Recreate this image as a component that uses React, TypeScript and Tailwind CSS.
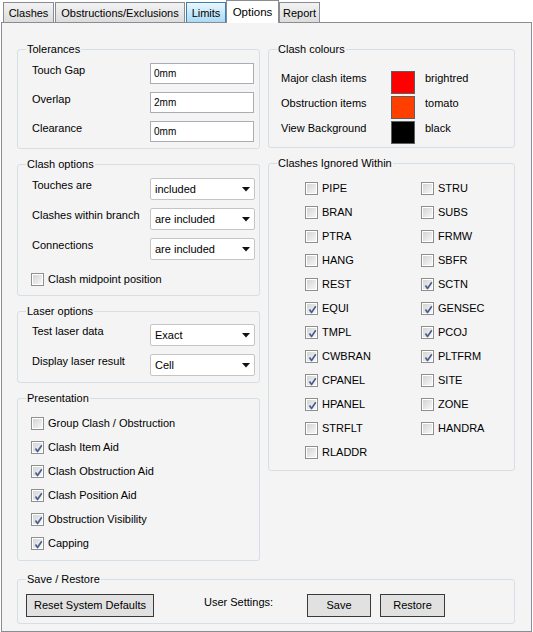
import React from 'react';

const PANEL_BG = 'bg-[#f4f4f4]';

function Check({ checked }: { checked?: boolean }) {
  return (
    <span className="relative flex h-[13px] w-[13px] shrink-0 items-center justify-center border border-[#8e8f8f] bg-white">
      <span className="h-[9px] w-[9px] bg-linear-to-br from-[#d4d4d4] to-[#f7f7f7]" />
      {checked && (
        <svg className="absolute left-[1px] top-[1px]" width="11" height="11" viewBox="0 0 11 11">
          <path d="M2.5 5.5 L4.5 8.5 L8.8 2.2" fill="none" stroke="#4b5e8f" strokeWidth="1.7" strokeLinejoin="round" />
        </svg>
      )}
    </span>
  );
}

function CheckRow({ label, checked }: { label: string; checked?: boolean }) {
  return (
    <div className="flex h-[13px] items-center gap-[4px]">
      <Check checked={checked} />
      <span className="leading-[13px]">{label}</span>
    </div>
  );
}

function Group({ title, className, children }: { title: string; className: string; children: React.ReactNode }) {
  return (
    <div className={`relative rounded-[3px] border border-[#d5dfe5] ${className}`}>
      <span className={`absolute left-[8px] top-[-8px] px-[1px] leading-[14px] ${PANEL_BG}`}>{title}</span>
      {children}
    </div>
  );
}

function TextBox({ value }: { value: string }) {
  return (
    <div className="flex h-[21px] w-[104px] items-center border border-[#abadb3] bg-white pl-[3px] text-[10px]">
      {value}
    </div>
  );
}

function Select({ value }: { value: string }) {
  return (
    <div className="flex h-[22px] w-[105px] items-center justify-between rounded-[2px] border border-[#c5c5c5] bg-white pl-[4px] pr-[4px]">
      <span>{value}</span>
      <svg width="8" height="5" viewBox="0 0 8 5">
        <path d="M0 0 H8 L4 4.5 Z" fill="#111" />
      </svg>
    </div>
  );
}

function FieldRow({ label, children }: { label: string; children: React.ReactNode }) {
  return (
    <div className="flex items-start">
      <span className="w-[118px] leading-[14px]">{label}</span>
      {children}
    </div>
  );
}

function Tab({ label, variant }: { label: string; variant: 'normal' | 'hover' | 'active' }) {
  if (variant === 'active') {
    return (
      <div className="relative z-10 -mb-px flex h-[23px] w-[53px] items-start justify-center border border-b-0 border-[#898c95] bg-white pt-[3px] text-[11.5px]">
        {label}
      </div>
    );
  }
  const skin =
    variant === 'hover'
      ? 'border-[#3c7fb1] from-[#eaf6fd] to-[#a9dbf6]'
      : 'border-[#898c95] from-[#f3f3f3] to-[#dcdcdc]';
  return (
    <div className={`flex h-[20px] items-center justify-center border border-b-0 bg-linear-to-b pt-[1px] ${skin}`}>
      {label}
    </div>
  );
}

const colours = [
  { label: 'Major clash items', swatch: 'bg-[#ff0000]', name: 'brightred' },
  { label: 'Obstruction items', swatch: 'bg-[#ff3f00]', name: 'tomato' },
  { label: 'View Background', swatch: 'bg-[#000000]', name: 'black' },
];

const ignoredLeft: [string, boolean][] = [
  ['PIPE', false],
  ['BRAN', false],
  ['PTRA', false],
  ['HANG', false],
  ['REST', false],
  ['EQUI', true],
  ['TMPL', true],
  ['CWBRAN', true],
  ['CPANEL', true],
  ['HPANEL', true],
  ['STRFLT', false],
  ['RLADDR', false],
];

const ignoredRight: [string, boolean][] = [
  ['STRU', false],
  ['SUBS', false],
  ['FRMW', false],
  ['SBFR', false],
  ['SCTN', true],
  ['GENSEC', true],
  ['PCOJ', true],
  ['PLTFRM', true],
  ['SITE', false],
  ['ZONE', false],
  ['HANDRA', false],
];

export default function App() {
  return (
    <div className="h-[632px] w-[533px] overflow-hidden bg-white font-['Liberation_Sans',Arial,sans-serif] text-[11px] text-black">
      {/* tab strip */}
      <div className="flex h-[22px] items-end">
        <div className="ml-[3px] w-[51px]">
          <Tab label="Clashes" variant="normal" />
        </div>
        <div className="ml-[1px] w-[130px]">
          <Tab label="Obstructions/Exclusions" variant="normal" />
        </div>
        <div className="ml-[1px] w-[40px]">
          <Tab label="Limits" variant="hover" />
        </div>
        <Tab label="Options" variant="active" />
        <div className="w-[41px]">
          <Tab label="Report" variant="normal" />
        </div>
      </div>

      {/* tab page */}
      <div className={`ml-[1px] h-[610px] w-[531px] border border-[#898c95] pl-[15px] pt-[26px] ${PANEL_BG}`}>
        <div className="flex gap-[8px]">
          <div className="flex w-[243px] flex-col gap-[15px]">
            <Group title="Tolerances" className="h-[100px]">
              <div className="flex flex-col gap-[8px] pl-[14px] pt-[13px]">
                <FieldRow label="Touch Gap">
                  <TextBox value="0mm" />
                </FieldRow>
                <FieldRow label="Overlap">
                  <TextBox value="2mm" />
                </FieldRow>
                <FieldRow label="Clearance">
                  <TextBox value="0mm" />
                </FieldRow>
              </div>
            </Group>

            <Group title="Clash options" className="h-[132px]">
              <div className="flex flex-col gap-[8px] pl-[14px] pt-[13px]">
                <FieldRow label="Touches are">
                  <Select value="included" />
                </FieldRow>
                <FieldRow label="Clashes within branch">
                  <Select value="are included" />
                </FieldRow>
                <FieldRow label="Connections">
                  <Select value="are included" />
                </FieldRow>
              </div>
              <div className="mt-[13px] pl-[13px]">
                <CheckRow label="Clash midpoint position" />
              </div>
            </Group>

            <Group title="Laser options" className="h-[72px]">
              <div className="flex flex-col gap-[8px] pl-[14px] pt-[12px]">
                <FieldRow label="Test laser data">
                  <Select value="Exact" />
                </FieldRow>
                <FieldRow label="Display laser result">
                  <Select value="Cell" />
                </FieldRow>
              </div>
            </Group>

            <Group title="Presentation" className="h-[163px]">
              <div className="flex flex-col gap-[11px] pl-[13px] pt-[18px]">
                <CheckRow label="Group Clash / Obstruction" />
                <CheckRow label="Clash Item Aid" checked />
                <CheckRow label="Clash Obstruction Aid" checked />
                <CheckRow label="Clash Position Aid" checked />
                <CheckRow label="Obstruction Visibility" checked />
                <CheckRow label="Capping" checked />
              </div>
            </Group>
          </div>

          <div className="flex w-[247px] flex-col gap-[15px]">
            <Group title="Clash colours" className="h-[99px]">
              <div className="flex flex-col gap-[2px] pl-[12px] pt-[21px]">
                {colours.map((c) => (
                  <div key={c.name} className="flex items-start">
                    <span className="w-[110px] leading-[14px]">{c.label}</span>
                    <span className={`h-[23px] w-[24px] border border-[#5f5f5f] ${c.swatch}`} />
                    <span className="ml-[10px] leading-[14px]">{c.name}</span>
                  </div>
                ))}
              </div>
            </Group>

            <Group title="Clashes Ignored Within" className="h-[308px]">
              <div className="flex pl-[36px] pt-[18px]">
                <div className="flex w-[116px] flex-col gap-[11px]">
                  {ignoredLeft.map(([name, on]) => (
                    <CheckRow key={name} label={name} checked={on} />
                  ))}
                </div>
                <div className="flex flex-col gap-[11px]">
                  {ignoredRight.map(([name, on]) => (
                    <CheckRow key={name} label={name} checked={on} />
                  ))}
                </div>
              </div>
            </Group>
          </div>
        </div>

        <Group title="Save / Restore" className="mt-[18px] h-[45px] w-[498px]">
          <div className="flex items-start pl-[8px] pt-[14px]">
            <button className="h-[23px] w-[128px] border border-[#3a3a3a] bg-[#e1e1e1] text-[11px]">
              Reset System Defaults
            </button>
            <span className="ml-[50px] w-[103px] pt-[1px] leading-[14px]">User Settings:</span>
            <button className="h-[23px] w-[64px] border border-[#3a3a3a] bg-[#e1e1e1] text-[11px]">Save</button>
            <button className="ml-[9px] h-[23px] w-[65px] border border-[#3a3a3a] bg-[#e1e1e1] text-[11px]">
              Restore
            </button>
          </div>
        </Group>
      </div>
    </div>
  );
}
